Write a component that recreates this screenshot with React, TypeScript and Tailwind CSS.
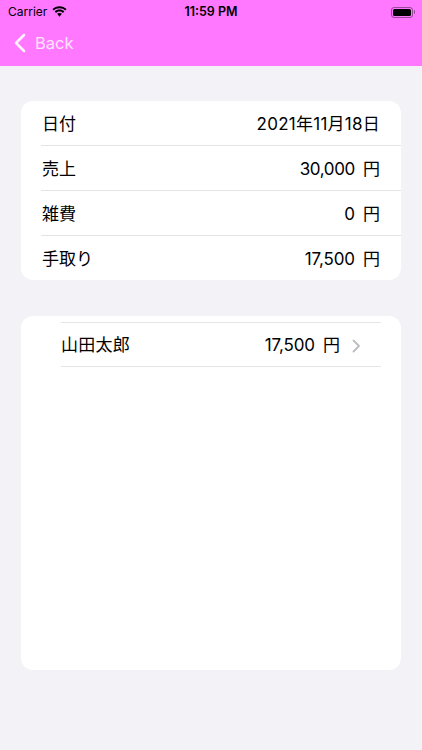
import { Fragment } from 'react';

const font = "font-['Inter','Noto_Sans_CJK_JP',sans-serif]";

const rows = [
  { label: '日付', value: '2021年11月18日', track: 'tracking-[0.25px]' },
  { label: '売上', value: '30,000', unit: '円', track: 'tracking-[-0.35px]' },
  { label: '雑費', value: '0', unit: '円', track: '' },
  { label: '手取り', value: '17,500', unit: '円', track: 'tracking-[-0.1px]' },
];

function StatusBar() {
  return (
    <div className="relative flex h-5 items-center justify-between pl-2 pr-[7px] pt-1 text-black">
      <div className="flex items-center gap-[5px]">
        <span className="text-[12px] leading-none">Carrier</span>
        <svg width="15" height="11" viewBox="0 0 16 12" className="mb-0.5">
          <path d="M8 2.4c2.4 0 4.6.9 6.2 2.5l1.5-1.6C13.7 1.4 11 .2 8 .2S2.3 1.4.3 3.3l1.5 1.6C3.4 3.3 5.6 2.4 8 2.4z" fill="#000" />
          <path d="M8 6c1.4 0 2.7.5 3.7 1.5l1.5-1.6C11.8 4.5 10 3.8 8 3.8s-3.8.7-5.2 2.1l1.5 1.6C5.3 6.5 6.6 6 8 6z" fill="#000" />
          <path d="M8 7.5c-1 0-1.9.4-2.6 1L8 11.6l2.6-3.1c-.7-.6-1.6-1-2.6-1z" fill="#000" />
        </svg>
      </div>
      <span className="absolute left-0 right-0 text-center text-[12.5px] font-semibold leading-none">11:59 PM</span>
      <div className="flex items-center">
        <div className="flex h-[11px] w-[22px] items-center rounded-[3px] border border-black/40 p-px">
          <div className="h-full w-full rounded-[1.5px] bg-black" />
        </div>
        <div className="ml-px h-1 w-px rounded-r bg-black/40" />
      </div>
    </div>
  );
}

export default function App() {
  return (
    <div className={`${font} flex h-[750px] w-[422px] flex-col overflow-hidden bg-[#f2f2f7] text-black`}>
      <header className="h-[66px] bg-[#ff78ff]">
        <StatusBar />
        <div className="flex items-center pl-[13px] pt-2 text-white/80">
          <svg width="13" height="20" viewBox="0 0 13 20" fill="none">
            <path d="M11 2 3 10l8 8" stroke="#fff" strokeOpacity="0.9" strokeWidth="2.6" strokeLinecap="round" strokeLinejoin="round" />
          </svg>
          <span className="ml-[9px] text-[16.5px] leading-[30px]">Back</span>
        </div>
      </header>

      <main className="flex flex-1 flex-col gap-9 px-[21px] pt-[35px]">
        <section className="h-[179px] rounded-xl bg-white pl-5">
          {rows.map((row, i) => (
            <Fragment key={row.label}>
              {i > 0 && <div className="h-px bg-[#e4e4e6]" />}
              <div className="flex h-[44px] items-center justify-between pl-px pr-[21px] pt-1 text-[17px]">
                <span>{row.label}</span>
                <div className="flex items-center">
                  <span className={row.track}>{row.value}</span>
                  {row.unit && <span className="ml-2">{row.unit}</span>}
                </div>
              </div>
            </Fragment>
          ))}
        </section>

        <section className="h-[354px] rounded-xl bg-white pl-[40px] pr-5 pt-[6px]">
          <div className="h-px bg-[#e4e4e6]" />
          <div className="flex h-[43px] items-center justify-between pt-0.5 text-[17px]">
            <span className="tracking-[0.25px]">山田太郎</span>
            <div className="flex items-center">
              <span className="tracking-[-0.1px]">17,500</span>
              <span className="ml-2">円</span>
              <svg width="9" height="14" viewBox="0 0 9 14" fill="none" className="ml-3 mr-5">
                <path d="M1.5 1.5 7 7l-5.5 5.5" stroke="#bdbdc2" strokeWidth="1.8" strokeLinecap="round" strokeLinejoin="round" />
              </svg>
            </div>
          </div>
          <div className="h-px bg-[#e4e4e6]" />
        </section>
      </main>
    </div>
  );
}
